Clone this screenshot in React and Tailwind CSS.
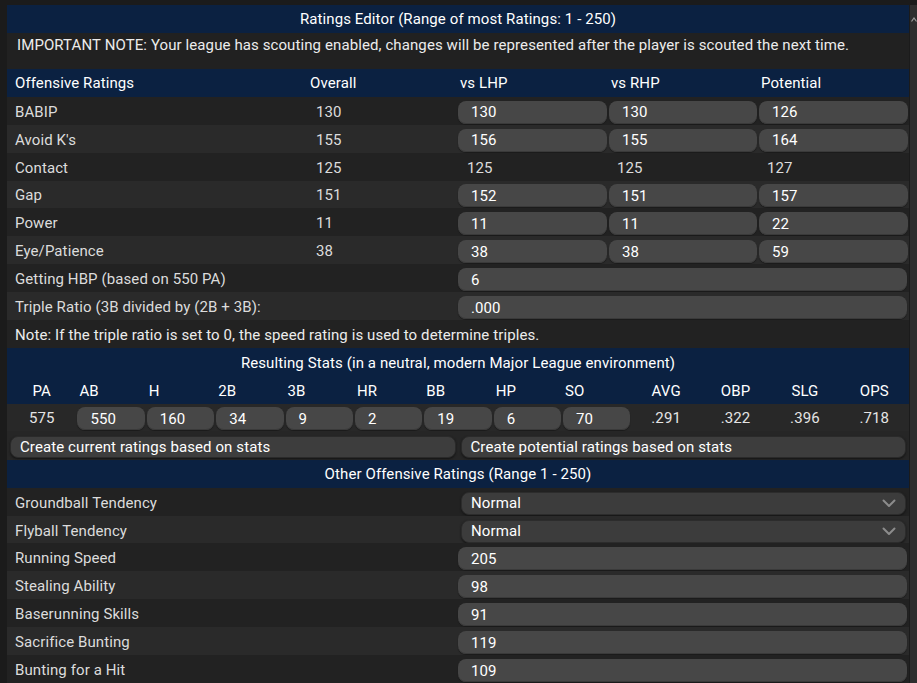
import React from 'react';

const navy = 'bg-[#0b2141]';

const offensive = [
    { label: 'BABIP', overall: '130', l: '130', r: '130', p: '126', edit: true },
    { label: "Avoid K's", overall: '155', l: '156', r: '155', p: '164', edit: true },
    { label: 'Contact', overall: '125', l: '125', r: '125', p: '127', edit: false },
    { label: 'Gap', overall: '151', l: '152', r: '151', p: '157', edit: true },
    { label: 'Power', overall: '11', l: '11', r: '11', p: '22', edit: true },
    { label: 'Eye/Patience', overall: '38', l: '38', r: '38', p: '59', edit: true },
];

const statCols = [
    { k: 'PA', v: '575', input: false },
    { k: 'AB', v: '550', input: true },
    { k: 'H', v: '160', input: true },
    { k: '2B', v: '34', input: true },
    { k: '3B', v: '9', input: true },
    { k: 'HR', v: '2', input: true },
    { k: 'BB', v: '19', input: true },
    { k: 'HP', v: '6', input: true },
    { k: 'SO', v: '70', input: true },
    { k: 'AVG', v: '.291', input: false },
    { k: 'OBP', v: '.322', input: false },
    { k: 'SLG', v: '.396', input: false },
    { k: 'OPS', v: '.718', input: false },
];

const other = [
    { label: 'Groundball Tendency', value: 'Normal', select: true },
    { label: 'Flyball Tendency', value: 'Normal', select: true },
    { label: 'Running Speed', value: '205' },
    { label: 'Stealing Ability', value: '98' },
    { label: 'Baserunning Skills', value: '91' },
    { label: 'Sacrifice Bunting', value: '119' },
    { label: 'Bunting for a Hit', value: '109' },
];

const rowBg = (i) => (i % 2 === 0 ? 'bg-[#222222]' : 'bg-[#2a2a2a]');

const Field = ({ children, className = '' }) => (
    <div className={`h-[23px] rounded-[8px] bg-[#474747] shadow-[inset_0_-1px_0_#3a3a3a,0_1px_1px_#1a1a1a] flex items-center pt-[1px] pl-[13px] text-white ${className}`}>
        {children}
    </div>
);

const Chevron = () => (
    <svg width="14" height="9" viewBox="0 0 14 9" fill="none">
        <path d="M1.5 1.5 L7 7 L12.5 1.5" stroke="#8c8c8c" strokeWidth="2" strokeLinecap="round" strokeLinejoin="round" />
    </svg>
);

const Select = ({ value }) => (
    <div className="ml-[3px] mr-[2px] h-[23px] rounded-[8px] bg-[#3c3c3c] border border-[#2c2c2c] shadow-[0_1px_2px_#151515] flex items-center justify-between pt-[1px] pl-[9px] pr-[9px] text-white">
        <span>{value}</span>
        <Chevron />
    </div>
);

const App = () => {
    return (
        <div className="w-[917px] h-[683px] overflow-hidden bg-[#1b1b1b] flex text-[15px] tracking-[0.1px] leading-none" style={{ fontFamily: 'Roboto, "Noto Sans", sans-serif' }}>
            <div className="w-[909px] pl-[7px] pt-[5px] flex flex-col">
                {/* title */}
                <div className={`${navy} h-[28px] pt-[2px] flex items-center justify-center text-white`}>
                    Ratings Editor (Range of most Ratings: 1 - 250)
                </div>
                <div className="bg-[#212121] h-[36px] pl-[10px] pt-[5px] text-[#ececec]">
                    IMPORTANT NOTE: Your league has scouting enabled, changes will be represented after the player is scouted the next time.
                </div>

                {/* offensive ratings */}
                <div className={`${navy} h-[28px] pt-[2px] grid grid-cols-[300px_151px_150px_150px_151px] items-center text-white`}>
                    <div className="pl-[8px]">Offensive Ratings</div>
                    <div className="pl-[3px]">Overall</div>
                    <div className="pl-[2px]">vs LHP</div>
                    <div className="pl-[3px]">vs RHP</div>
                    <div className="pl-[3px]">Potential</div>
                </div>
                {offensive.map((r, i) => (
                    <div key={r.label} className={`${rowBg(i)} h-[28px] pt-[3px] grid grid-cols-[300px_151px_150px_150px_151px] items-center text-[#dcdcdc]`}>
                        <div className="pl-[8px]">{r.label}</div>
                        <div className="pl-[9px]">{r.overall}</div>
                        {r.edit ? (
                            <>
                                <Field className="mr-[1px]">{r.l}</Field>
                                <Field className="ml-[1px] mr-[1px] pl-[12px]">{r.r}</Field>
                                <Field className="ml-[1px] mr-[1px] pl-[12px]">{r.p}</Field>
                            </>
                        ) : (
                            <>
                                <div className="pl-[9px]">{r.l}</div>
                                <div className="pl-[9px]">{r.r}</div>
                                <div className="pl-[9px]">{r.p}</div>
                            </>
                        )}
                    </div>
                ))}
                <div className="bg-[#222222] h-[28px] pt-[3px] grid grid-cols-[451px_450px] items-center text-[#dcdcdc]">
                    <div className="pl-[8px]">Getting HBP (based on 550 PA)</div>
                    <Field className="mr-[1px]">6</Field>
                </div>
                <div className="bg-[#2a2a2a] h-[28px] pt-[3px] grid grid-cols-[451px_450px] items-center text-[#dcdcdc]">
                    <div className="pl-[8px]">Triple Ratio (3B divided by (2B + 3B):</div>
                    <Field className="mr-[1px]">.000</Field>
                </div>
                <div className="bg-[#222222] h-[28px] pt-[3px] flex items-center pl-[8px] text-[#ececec]">
                    Note: If the triple ratio is set to 0, the speed rating is used to determine triples.
                </div>

                {/* resulting stats */}
                <div className={`${navy} h-[28px] pt-[3px] flex items-center justify-center text-white`}>
                    Resulting Stats (in a neutral, modern Major League environment)
                </div>
                <div className={`${navy} h-[28px] pt-[3px] grid grid-cols-13 items-center text-white`}>
                    {statCols.map((c) => (
                        <div key={c.k} className={c.input ? 'pl-[3px]' : 'text-center'}>{c.k}</div>
                    ))}
                </div>
                <div className="bg-[#282828] h-[27px] pt-[3px] grid grid-cols-13 items-center text-[#e4e4e4]">
                    {statCols.map((c) =>
                        c.input ? (
                            <Field key={c.k} className="h-[22px] mx-[1px] pl-[12px]">{c.v}</Field>
                        ) : (
                            <div key={c.k} className="text-center">{c.v}</div>
                        )
                    )}
                </div>
                <div className="bg-[#262626] h-[29px] pt-[3px] grid grid-cols-2 gap-[5px] items-center pl-[3px] pr-[3px]">
                    <div className="h-[22px] rounded-[8px] bg-[#3d3d3d] border border-[#2a2a2a] shadow-[0_1px_2px_#141414] flex items-center pt-[1px] pl-[9px] text-white">
                        Create current ratings based on stats
                    </div>
                    <div className="h-[22px] rounded-[8px] bg-[#3d3d3d] border border-[#2a2a2a] shadow-[0_1px_2px_#141414] flex items-center pt-[1px] pl-[9px] text-white">
                        Create potential ratings based on stats
                    </div>
                </div>

                {/* other ratings */}
                <div className={`${navy} h-[28px] pt-[2px] flex items-center justify-center text-white`}>
                    Other Offensive Ratings (Range 1 - 250)
                </div>
                {other.map((r, i) => (
                    <div key={r.label} className={`${rowBg(i)} h-[28px] pt-[3px] grid grid-cols-[451px_450px] items-center text-[#dcdcdc]`}>
                        <div className="pl-[8px]">{r.label}</div>
                        {r.select ? <Select value={r.value} /> : <Field className="mr-[1px] pl-[12px]">{r.value}</Field>}
                    </div>
                ))}
            </div>

            {/* scrollbar */}
            <div className="w-[8px] ml-[1px] mt-[5px] bg-[#2e2e2e] flex justify-center pt-[12px]">
                <svg width="6" height="5" viewBox="0 0 6 5">
                    <path d="M0.5 4.5 L3 1 L5.5 4.5" stroke="#9a9a9a" strokeWidth="1.2" fill="none" />
                </svg>
            </div>
        </div>
    );
};

export default App;
